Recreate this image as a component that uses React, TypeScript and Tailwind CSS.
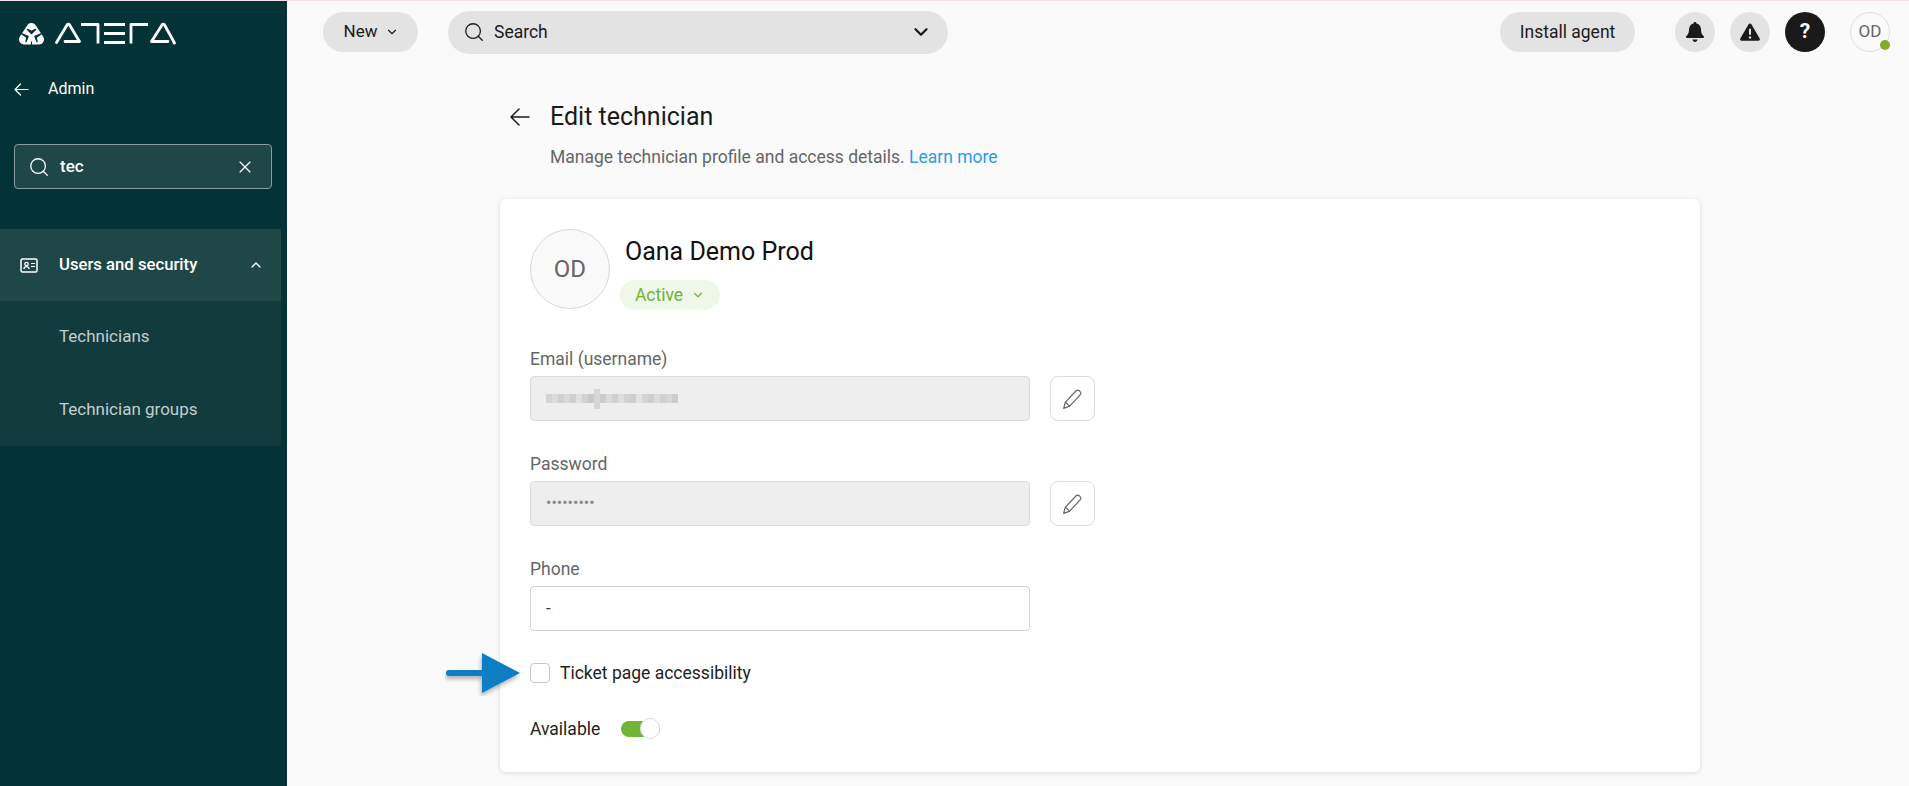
import { ChevronDown, ChevronUp, Search, X } from "lucide-react";

const mosaic = [
  "bg-[#d4d4d4]", "bg-[#dcdcdc]", "bg-[#d0d0d0]", "bg-[#d8d8d8]", "bg-[#cfcfcf]", "bg-[#e0e0e0]", "bg-[#d2d2d2]", "bg-[#c8c8c8]",
  "bg-[#d6d6d6]", "bg-[#cccccc]", "bg-[#dadada]", "bg-[#d0d0d0]", "bg-[#dedede]", "bg-[#d2d2d2]", "bg-[#cecece]", "bg-[#e2e2e2]",
  "bg-[#d4d4d4]", "bg-[#cfcfcf]", "bg-[#dcdcdc]", "bg-[#d0d0d0]", "bg-[#d6d6d6]", "bg-[#cccccc]",
];

function Logo() {
  return (
    <svg width="157" height="23" viewBox="0 0 157 23" fill="none" aria-label="Atera logo">
      <path d="M12.500 6 20 17.500H5Z" fill="#fff" stroke="#fff" strokeWidth="10" strokeLinejoin="round" />
      <g stroke="#033336" fill="#033336" strokeLinejoin="round" strokeLinecap="round" strokeWidth="1.500">
        <path d="M8.500 7.500 12.500 11.500 16.500 7.500 12.500 9.500Z" />
        <path d="M3 12 9 14.500 7 19.500 8 15.500Z" />
        <path d="M22 12 16 14.500 18 19.500 17 15.500Z" />
        <path d="M12.500 19.500V23" strokeWidth="1.200" strokeLinecap="butt" />
      </g>
      <g stroke="#fff" strokeWidth="2.800" strokeLinejoin="round" strokeLinecap="round">
        <path d="M37.500 20.500 48 3a1.500 1.500 0 0 1 2.600 0L60.500 19.500H46" />
        <path d="M62 2.500H79V21.500" strokeLinecap="butt" />
        <path d="M85 2.500H106M85 11.500H106M85 20.500H106" strokeLinecap="butt" />
        <path d="M112 21.500V2.500H129" strokeLinecap="butt" />
        <path d="M132.500 19.500 143 3a1.500 1.500 0 0 1 2.600 0L155.500 21H155M132.500 19.500H149" />
      </g>
    </svg>
  );
}

function BackArrow({ w, h, sw, className }: { w: number; h: number; sw: number; className?: string }) {
  return (
    <svg width={w} height={h} viewBox={`0 0 ${w} ${h}`} fill="none" stroke="currentColor" strokeWidth={sw} strokeLinecap="round" strokeLinejoin="round" className={className}>
      <path d={`M${w - 1} ${h / 2}H1M${h / 2} 1 1 ${h / 2}l${h / 2 - 1} ${h / 2 - 1}`} />
    </svg>
  );
}

function Sidebar() {
  return (
    <aside className="w-[287px] shrink-0 bg-[#033336] text-white flex flex-col">
      <div className="pl-[19px] pt-[21px] h-[64px]">
        <Logo />
      </div>
      <div className="flex items-center h-[48px] pl-[14px]">
        <BackArrow w={15} h={13} sw={1.200} />
        <span className="ml-[19px] text-[16px] text-white">Admin</span>
      </div>
      <div className="mt-[31px] mx-[14px] w-[258px] h-[45px] rounded-[4px] border border-[#8a9e9f] bg-[#1f4747] flex items-center pl-[13px] pr-[16px]">
        <Search size={22} strokeWidth={1.400} />
        <span className="ml-[10px] text-[17px] font-medium flex-1">tec</span>
        <X size={20} strokeWidth={1.400} />
      </div>
      <div className="mt-[40px] w-[281px]">
        <div className="h-[72px] bg-[#1f4747] flex items-center pl-[20px] pr-[17px]">
          <svg width="18" height="15" viewBox="0 0 18 15" fill="none" stroke="#fff" strokeWidth="1.500">
            <rect x="1" y="1" width="16" height="13" rx="1.500" />
            <circle cx="6.500" cy="6" r="1.700" fill="none" strokeWidth="1.300" />
            <path d="M3.800 11c.3-1.500 1.300-2.300 2.700-2.300S8.900 9.500 9.200 11" strokeWidth="1.300" />
            <path d="M11 5.500h4M11 8.500h4" strokeWidth="1.200" />
          </svg>
          <span className="ml-[21px] text-[16.700px] font-medium flex-1">Users and security</span>
          <ChevronUp size={16} strokeWidth={2} />
        </div>
        <div className="bg-[#123b3d] text-[#c3cfd0] text-[17px]">
          <div className="h-[73px] flex items-center pl-[59px] pb-[1px]">Technicians</div>
          <div className="h-[72px] flex items-center pl-[59px]">Technician groups</div>
        </div>
      </div>
    </aside>
  );
}

function TopBar() {
  return (
    <header className="h-[62px] flex items-center pl-[36px] pr-[19px]">
      <button className="w-[95px] h-[40px] rounded-full bg-[#e3e3e3] flex items-center justify-center gap-[8px] pl-[2px] text-[17px] text-[#1a1a1a]">
        New <ChevronDown size={14} strokeWidth={2} />
      </button>
      <div className="ml-[30px] w-[500px] h-[43px] rounded-full bg-[#e3e3e3] flex items-center pl-[15px] pr-[16px] text-[#1a1a1a]">
        <Search size={22} strokeWidth={1.400} />
        <span className="ml-[9px] text-[17.500px] flex-1">Search</span>
        <ChevronDown size={22} strokeWidth={2.500} />
      </div>
      <div className="flex-1" />
      <button className="w-[135px] h-[40px] rounded-full bg-[#e3e3e3] text-[17.500px] text-[#1a1a1a]">Install agent</button>
      <div className="ml-[40px] w-[40px] h-[40px] rounded-full bg-[#e3e3e3] flex items-center justify-center">
        <svg width="20" height="22" viewBox="0 0 20 22" fill="#1a1a1a">
          <path d="M10 1c.9 0 1.500.6 1.500 1.400 3 .7 4.500 3.200 4.500 6.100 0 3.500 1 5 2.800 6.700.6.600.2 1.800-.8 1.800H2c-1 0-1.400-1.200-.8-1.800C3 13.500 4 12 4 8.500c0-2.900 1.500-5.400 4.500-6.100C8.500 1.600 9.100 1 10 1Z" />
          <path d="M7.500 18.500h5C12.300 20 11.300 21 10 21s-2.300-1-2.500-2.500Z" />
        </svg>
      </div>
      <div className="ml-[15px] w-[40px] h-[40px] rounded-full bg-[#e3e3e3] flex items-center justify-center">
        <svg width="20" height="18" viewBox="0 0 20 18">
          <path d="M10 .5c.6 0 1.100.3 1.400.8l8.300 14.200c.6 1-.1 2.300-1.400 2.300H1.700C.4 17.800-.3 16.500.3 15.500L8.600 1.300C8.900.8 9.400.5 10 .5Z" fill="#1a1a1a" />
          <rect x="9" y="5.500" width="2" height="6.500" rx="1" fill="#e3e3e3" />
          <circle cx="10" cy="14.500" r="1.200" fill="#e3e3e3" />
        </svg>
      </div>
      <div className="ml-[15px] w-[40px] h-[40px] rounded-full bg-[#1a1a1a] flex items-center justify-center text-white text-[21px] font-bold">?</div>
      <div className="relative ml-[25px] w-[40px] h-[40px] rounded-full border border-[#dedede] flex items-center justify-center text-[17px] text-[#666]">
        OD
        <span className="absolute right-[-1px] bottom-[1px] w-[10px] h-[10px] rounded-full bg-[#84ac2c]" />
      </div>
    </header>
  );
}

function Pen() {
  return (
    <button className="ml-[20px] w-[45px] h-[45px] rounded-[8px] border border-[#dcdcdc] bg-white flex items-center justify-center text-[#666]">
      <svg width="22" height="22" viewBox="0 0 20 20" fill="none" stroke="currentColor" strokeWidth="1.100" strokeLinejoin="round">
        <path d="M1.500 18.500 3 13 12.800 2.500a2 2 0 0 1 2.900 0l.8.800a2 2 0 0 1 0 2.900L7 16.500Z" />
        <path d="M3 13 7 16.500" />
      </svg>
    </button>
  );
}

function Label({ children }: { children: string }) {
  return <div className="h-[29px] leading-[24px] text-[17.500px] text-[#666]">{children}</div>;
}

function Form() {
  return (
    <section className="ml-[213px] w-[1200px] h-[573px] bg-white rounded-[6px] shadow-[0_1px_5px_rgba(0,0,0,0.14)] px-[30px] pt-[30px]">
      <div className="flex h-[80px]">
        <div className="w-[80px] h-[80px] rounded-full border border-[#d8d8d8] bg-[#fafafa] flex items-center justify-center text-[24px] text-[#666]">OD</div>
        <div className="ml-[10px]">
          <div className="ml-[5px] mt-[8px] h-[30px] leading-[30px] text-[25px] text-[#111]">Oana Demo Prod</div>
          <div className="mt-[13px] w-[100px] h-[30px] rounded-full bg-[#eef7e8] flex items-center justify-center gap-[8px] text-[17.500px] text-[#6fb536]">
            Active <ChevronDown size={14} strokeWidth={2} />
          </div>
        </div>
      </div>
      <div className="mt-[38px]"><Label>Email (username)</Label></div>
      <div className="flex">
        <div className="w-[500px] h-[45px] rounded-[4px] border border-[#dcdcdc] bg-[#eeeeee] flex items-center pl-[15px]">
          <div className="flex items-center blur-[0.5px]">
            {mosaic.map((c, i) => (
              <span key={i} className={`w-[6px] ${i === 8 ? "h-[20px]" : "h-[9px]"} ${c}`} />
            ))}
          </div>
        </div>
        <Pen />
      </div>
      <div className="mt-[31px]"><Label>Password</Label></div>
      <div className="flex">
        <div className="w-[500px] h-[45px] rounded-[4px] border border-[#dcdcdc] bg-[#eeeeee] flex items-center pl-[15px] pb-[2px] text-[16px] text-[#888]">•••••••••</div>
        <Pen />
      </div>
      <div className="mt-[31px]"><Label>Phone</Label></div>
      <div className="w-[500px] h-[45px] rounded-[4px] border border-[#d4d4d4] bg-white flex items-center pl-[15px] text-[17px] text-[#333]">-</div>
      <div className="relative mt-[32px] flex items-center h-[20px]">
        <svg className="absolute left-[-85px] top-[-11px]" width="78" height="44" viewBox="0 0 78 44">
          <defs>
            <filter id="arrowShadow" x="-20%" y="-20%" width="140%" height="160%">
              <feDropShadow dx="-1" dy="3" stdDeviation="2" floodColor="#000" floodOpacity="0.3" />
            </filter>
          </defs>
          <path d="M4 18h33V1l38 20-38 20V24H4a3 3 0 0 1 0-6Z" fill="#0a7dc4" filter="url(#arrowShadow)" />
        </svg>
        <span className="w-[20px] h-[20px] rounded-[4px] border border-[#c8c8c8] bg-white" />
        <span className="ml-[10px] text-[17.500px] text-[#222]">Ticket page accessibility</span>
      </div>
      <div className="mt-[36px] flex items-center h-[20px]">
        <span className="text-[17.500px] text-[#222]">Available</span>
        <span className="relative ml-[21px] w-[39px] h-[16px] rounded-full bg-[#6fb536]">
          <span className="absolute right-0 top-[-3px] w-[20px] h-[21px] rounded-full bg-white border border-[#dcdcdc]" />
        </span>
      </div>
    </section>
  );
}

export default function App() {
  return (
    <div className="w-[1909px] h-[786px] overflow-hidden bg-[#fafafa] border-t border-[#f6dfee] flex font-['Roboto',sans-serif]">
      <Sidebar />
      <main className="flex-1 flex flex-col">
        <TopBar />
        <div className="ml-[223px] mt-[38px] flex items-center h-[32px]">
          <BackArrow w={20} h={18} sw={1.500} className="text-[#1a1a1a]" />
          <h1 className="ml-[20px] text-[25px] font-normal text-[#1a1a1a]">Edit technician</h1>
        </div>
        <p className="ml-[263px] mt-[12px] h-[24px] leading-[24px] text-[17.500px] text-[#666]">
          Manage technician profile and access details. <span className="text-[#2f9be8]">Learn more</span>
        </p>
        <div className="h-[30px]" />
        <Form />
      </main>
    </div>
  );
}
